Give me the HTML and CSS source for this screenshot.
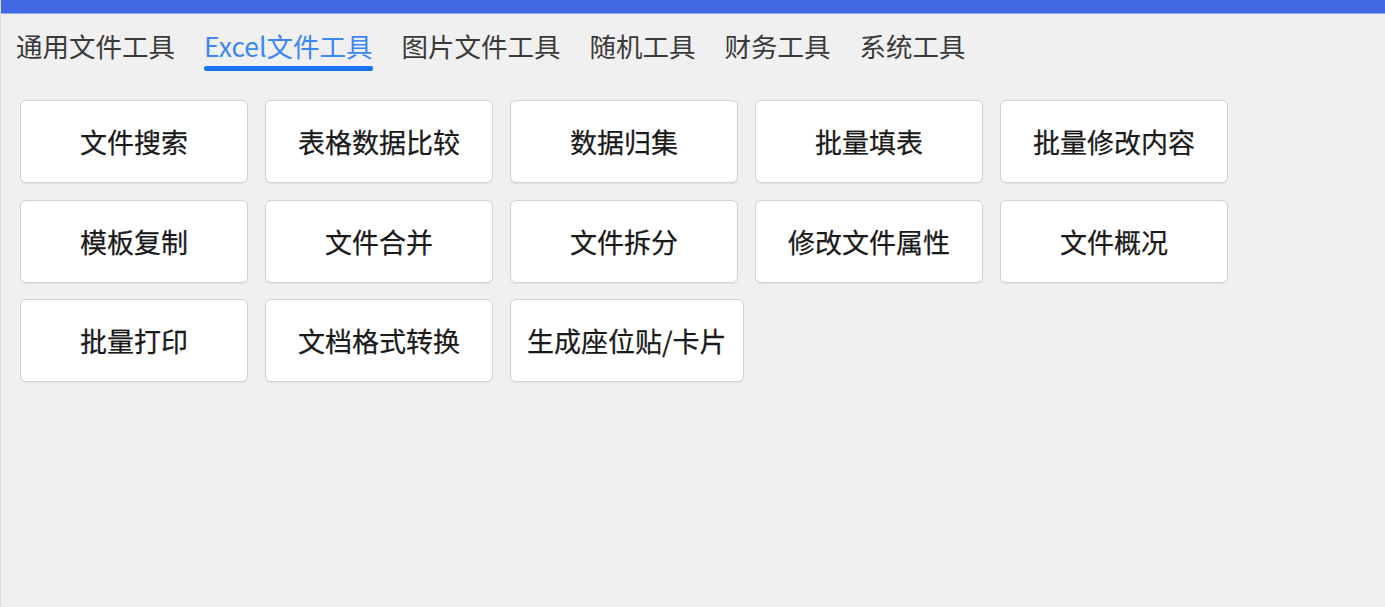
FILE: index.html
```html
<!DOCTYPE html>
<html lang="zh-CN">
<head>
<meta charset="utf-8">
<title>Excel文件工具</title>
<link rel="stylesheet" href="styles.css">
</head>
<body>
<div class="app">
  <div class="topbar"></div>
  <nav class="tabs">
    <div class="tab">通用文件工具</div>
    <div class="tab active">Excel文件工具</div>
    <div class="tab">图片文件工具</div>
    <div class="tab">随机工具</div>
    <div class="tab">财务工具</div>
    <div class="tab">系统工具</div>
  </nav>
  <main class="tools">
    <button class="tool">文件搜索</button>
    <button class="tool">表格数据比较</button>
    <button class="tool">数据归集</button>
    <button class="tool">批量填表</button>
    <button class="tool">批量修改内容</button>
    <button class="tool">模板复制</button>
    <button class="tool">文件合并</button>
    <button class="tool">文件拆分</button>
    <button class="tool">修改文件属性</button>
    <button class="tool">文件概况</button>
    <button class="tool">批量打印</button>
    <button class="tool">文档格式转换</button>
    <button class="tool">生成座位贴/卡片</button>
  </main>
</div>
</body>
</html>
```

FILE: styles.css
```css
* { box-sizing: border-box; }
html, body {
  margin: 0;
  padding: 0;
  height: 100%;
}
body {
  background: #f0f0f0;
  font-family: "Noto Sans CJK SC", "Noto Sans", sans-serif;
  color: #333;
}
.app {
  height: 100%;
  border-left: 1px solid #dcdcdc;
}
.topbar {
  height: 14px;
  background: #4169e1;
  border-bottom: 1px solid #8fa8f0;
}
.tabs {
  display: flex;
  gap: 29px;
  padding: 13px 0 0 15px;
}
.tab {
  display: flex;
  flex-direction: column;
  font-size: 26.5px;
  line-height: 37px;
  color: #3a3a3a;
  cursor: pointer;
}
.tab::after {
  content: "";
  display: block;
  height: 5px;
  margin-top: 2px;
  border-radius: 2px;
  background: transparent;
}
.tab.active {
  color: #3d87f5;
}
.tab.active::after {
  background: #1a73f0;
}
.tools {
  display: flex;
  flex-wrap: wrap;
  align-content: flex-start;
  gap: 16.5px 17px;
  padding: 29px 0 0 19px;
  max-width: 1240px;
}
.tool {
  min-width: 228px;
  height: 83px;
  padding: 0 16px;
  background: #fff;
  border: 1px solid #d2d2d2;
  border-radius: 6px;
  box-shadow: 0 1px 1px rgba(0, 0, 0, 0.06);
  font-family: "Noto Sans CJK SC", "Noto Sans", sans-serif;
  font-size: 27px;
  font-weight: 400;
  -webkit-text-stroke: 0.25px #1a1a1a;
  color: #1a1a1a;
  cursor: pointer;
}
```
